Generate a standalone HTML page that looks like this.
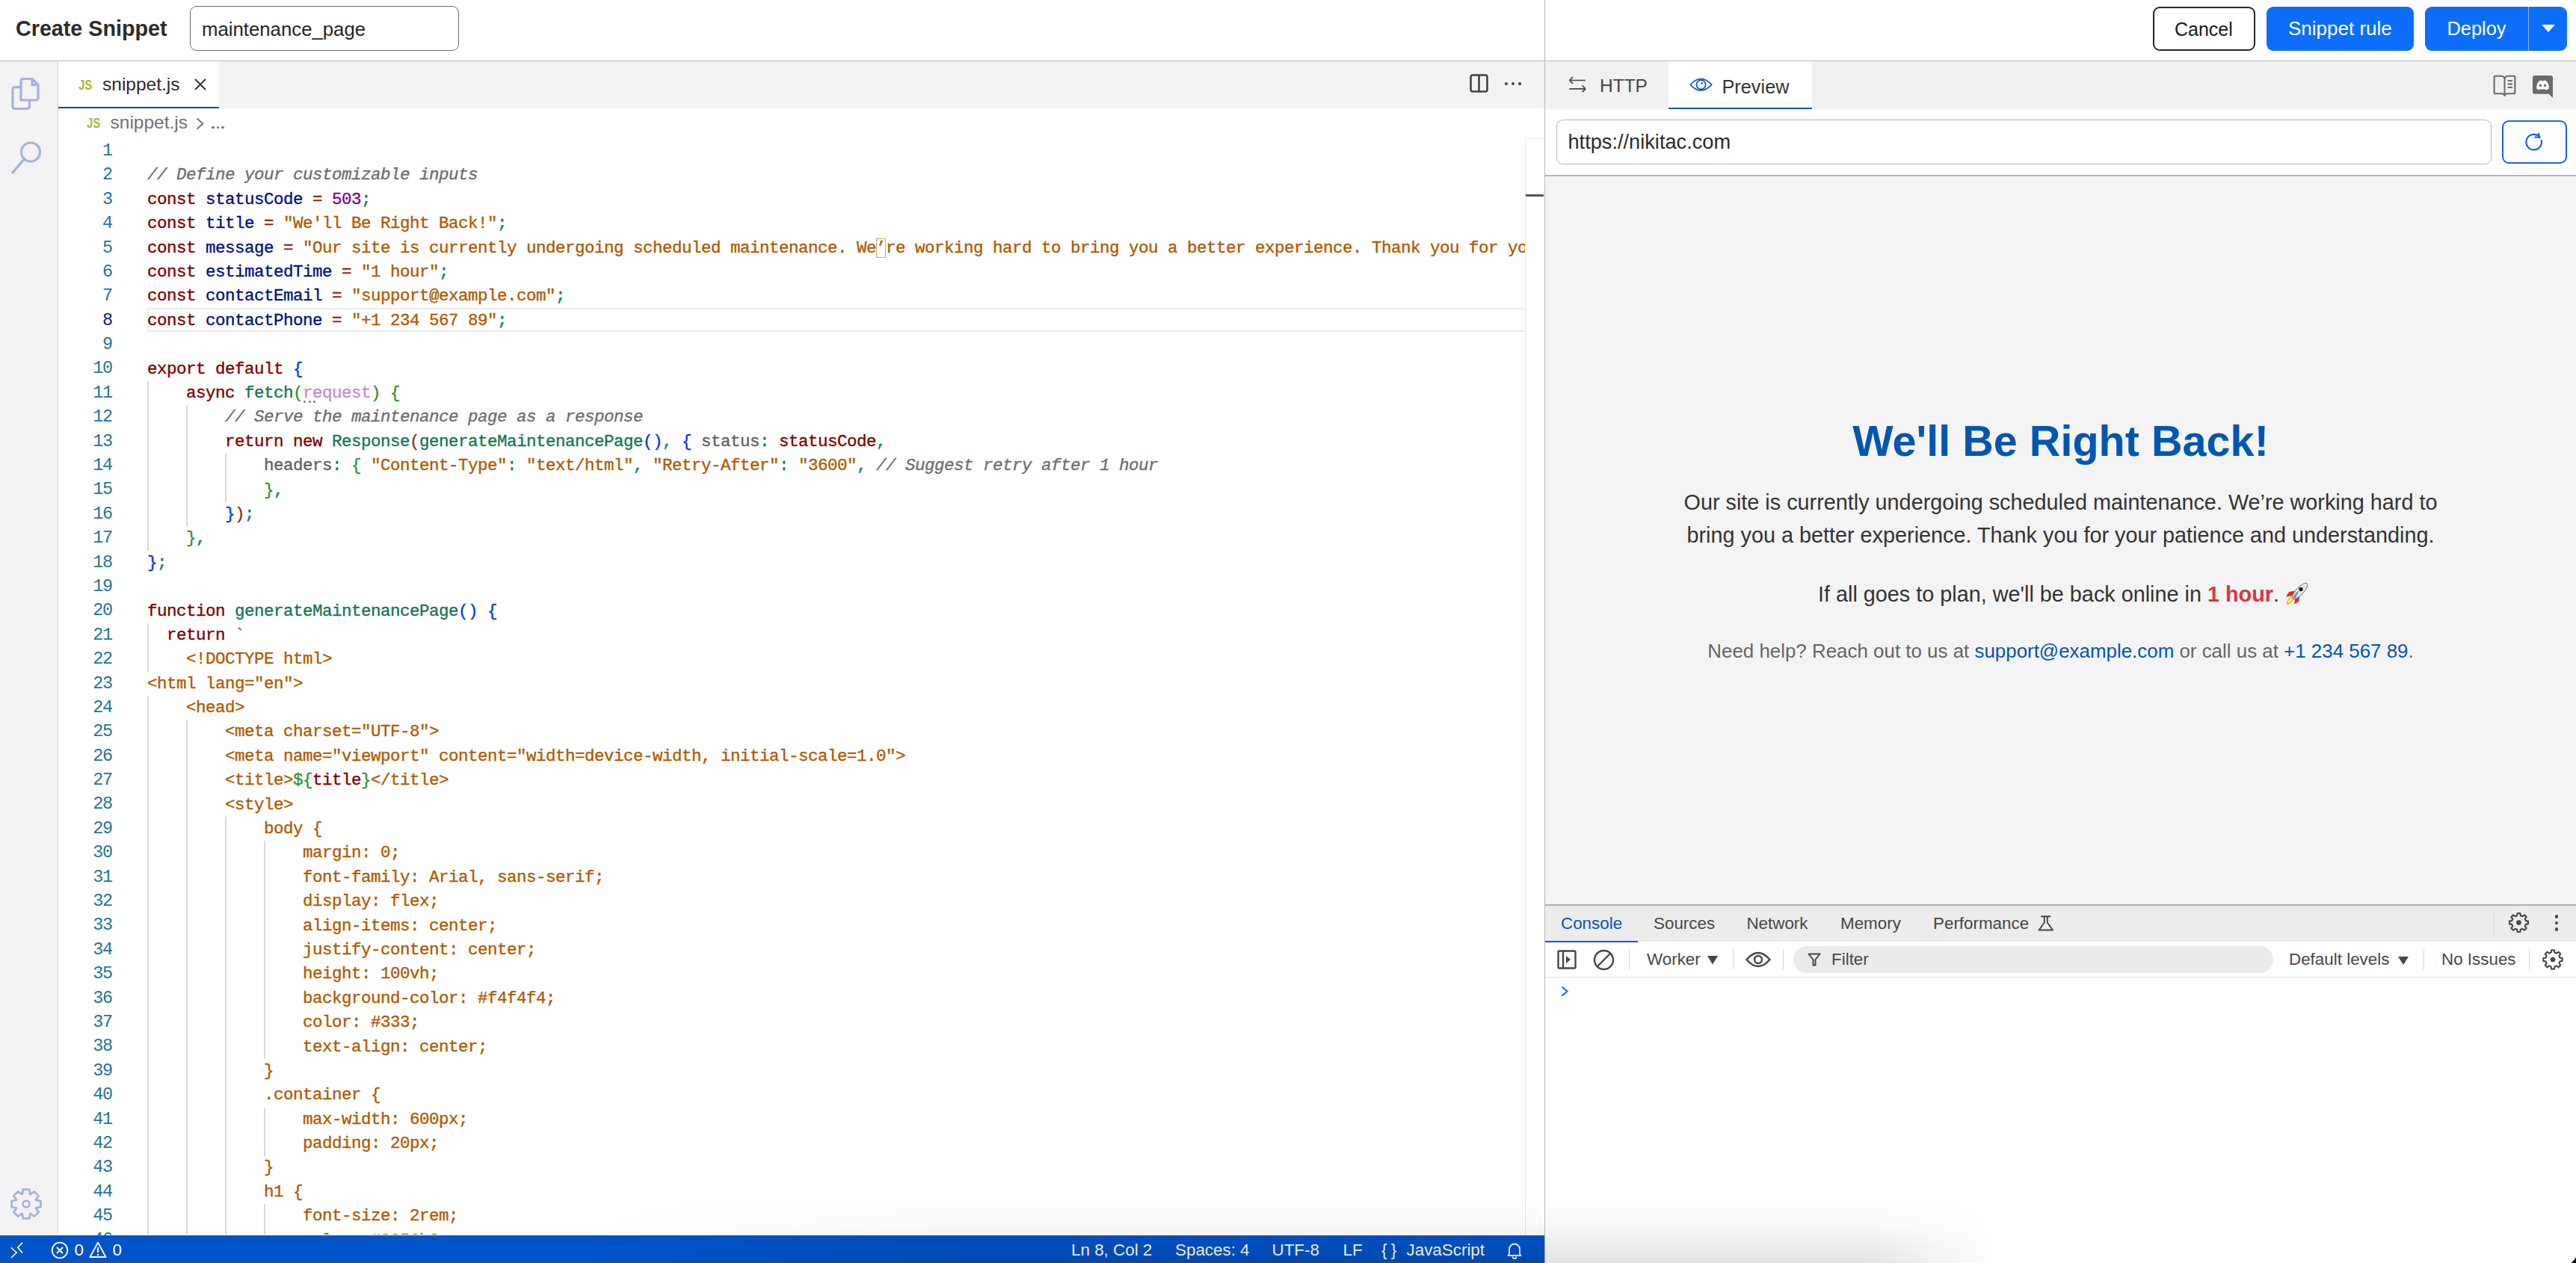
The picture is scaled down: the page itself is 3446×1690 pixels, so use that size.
<!DOCTYPE html><html><head><meta charset="utf-8"><style>
html,body{margin:0;padding:0;width:3446px;height:1690px;overflow:hidden;background:#fff}
.a{position:absolute;white-space:pre;margin:0;padding:0}
svg.a{overflow:visible}
.code{-webkit-text-stroke:0.35px currentColor;font-family:'Liberation Mono', monospace;font-size:22.5px;letter-spacing:-0.5023px;line-height:32.39px;height:32.39px}
.ln{left:90px;width:60px;text-align:right;font-family:'Liberation Mono', monospace;font-size:23.5px;line-height:26.621px;letter-spacing:-1.2px}
</style></head><body><div class="a" style="left:0px;top:0px;width:3446px;height:81px;background:#fff"></div><div class="a" style="left:0px;top:81px;width:3446px;height:1px;background:#b9b9b9"></div><div class="a" style="left:21px;top:22.03px;font-size:28.7px;line-height:32.058px;color:#2b2b2b;font-weight:bold;font-family:'Liberation Sans', sans-serif;">Create Snippet</div><div class="a" style="left:254px;top:8px;width:360px;height:60px;border:1.5px solid #6b6b6b;border-radius:9px;box-sizing:border-box;background:#fff"></div><div class="a" style="left:270px;top:24.70px;font-size:25.75px;line-height:28.763px;color:#262626;font-weight:normal;font-family:'Liberation Sans', sans-serif;">maintenance_page</div><div class="a" style="left:2880px;top:9px;width:137px;height:59px;border:2px solid #262626;border-radius:9px;box-sizing:border-box;background:#fff"></div><div class="a" style="left:2909px;top:26.38px;font-size:25px;line-height:27.925px;color:#1a1a1a;font-weight:normal;font-family:'Liberation Sans', sans-serif;">Cancel</div><div class="a" style="left:3032px;top:9px;width:197px;height:59px;background:#0d6efd;border-radius:9px"></div><div class="a" style="left:3061px;top:23.67px;font-size:26px;line-height:29.042px;color:#fff;font-weight:normal;font-family:'Liberation Sans', sans-serif;">Snippet rule</div><div class="a" style="left:3244px;top:9px;width:190px;height:59px;background:#0d6efd;border-radius:9px"></div><div class="a" style="left:3382px;top:9px;width:1px;height:59px;background:#8fbaf7"></div><div class="a" style="left:3273.5px;top:24.21px;font-size:25.4px;line-height:28.372px;color:#fff;font-weight:normal;font-family:'Liberation Sans', sans-serif;">Deploy</div><svg class="a" style="left:3400px;top:33px;" width="18" height="10" viewBox="0 0 18 10"><path d="M0 0 L18 0 L9 10 Z" fill="#fff"/></svg><div class="a" style="left:0px;top:82px;width:77px;height:1570px;background:#f3f3f3"></div><div class="a" style="left:77px;top:82px;width:1px;height:1570px;background:#d4d4d4"></div><svg class="a" style="left:14px;top:103px;" width="40" height="45" viewBox="0 0 40 45"><path d="M14 31 V5.5 a3 3 0 0 1 3-3 H29 L37 10.5 V28 a3 3 0 0 1 -3 3 Z" fill="none" stroke="#a4b4de" stroke-width="3.2" stroke-linejoin="round"/><path d="M29 3 V10.5 H37" fill="none" stroke="#a4b4de" stroke-width="3.2"/><path d="M14 13.6 H6 a3 3 0 0 0 -3 3 V39.5 a3 3 0 0 0 3 3 H22.5 a3 3 0 0 0 3-3 V31" fill="none" stroke="#a4b4de" stroke-width="3.2" stroke-linejoin="round"/></svg><svg class="a" style="left:14px;top:188px;" width="44" height="46" viewBox="0 0 44 46"><circle cx="27" cy="15.5" r="12.5" fill="none" stroke="#a4b4de" stroke-width="3.2"/><path d="M18.5 24.5 L3 43" stroke="#a4b4de" stroke-width="3.4" stroke-linecap="round"/></svg><svg class="a" style="left:13px;top:1588.5px;" width="44" height="44" viewBox="0 0 44 44"><path d="M35.24 16.87 L41.47 17.91 L41.47 26.09 L35.24 27.13 L34.99 27.73 L38.67 32.88 L32.88 38.67 L27.73 34.99 L27.13 35.24 L26.09 41.47 L17.91 41.47 L16.87 35.24 L16.27 34.99 L11.12 38.67 L5.33 32.88 L9.01 27.73 L8.76 27.13 L2.53 26.09 L2.53 17.91 L8.76 16.87 L9.01 16.27 L5.33 11.12 L11.12 5.33 L16.27 9.01 L16.87 8.76 L17.91 2.53 L26.09 2.53 L27.13 8.76 L27.73 9.01 L32.88 5.33 L38.67 11.12 L34.99 16.27 Z" fill="none" stroke="#a4b4de" stroke-width="2.8" stroke-linejoin="round"/><circle cx="22" cy="22" r="4.4" fill="none" stroke="#a4b4de" stroke-width="2.8"/></svg><div class="a" style="left:78px;top:82px;width:1988px;height:63px;background:#f3f3f3"></div><div class="a" style="left:78px;top:82px;width:215px;height:63px;background:#fff"></div><div class="a" style="left:78px;top:143px;width:215px;height:2px;background:#0e4d9b"></div><div class="a" style="left:104.8px;top:102.81px;font-size:19px;line-height:21.223px;color:#b3b33a;font-weight:bold;font-family:'Liberation Sans', sans-serif;transform:scaleX(0.8);transform-origin:0 0;letter-spacing:-0.3px">JS</div><div class="a" style="left:137px;top:99.23px;font-size:24.5px;line-height:27.366px;color:#2b2b2b;font-weight:normal;font-family:'Liberation Sans', sans-serif;">snippet.js</div><svg class="a" style="left:260px;top:105px;" width="16" height="16" viewBox="0 0 16 16"><path d="M1 1 L15 15 M15 1 L1 15" stroke="#333" stroke-width="1.9"/></svg><svg class="a" style="left:1966px;top:99px;" width="25" height="26" viewBox="0 0 25 26"><rect x="1.5" y="1.5" width="22" height="22" rx="2.5" fill="none" stroke="#424242" stroke-width="2.6"/><path d="M12.5 2 V24" stroke="#424242" stroke-width="2.6"/></svg><div class="a" style="left:2013px;top:110px;width:4.4px;height:4.4px;background:#424242;border-radius:50%"></div><div class="a" style="left:2022px;top:110px;width:4.4px;height:4.4px;background:#424242;border-radius:50%"></div><div class="a" style="left:2031px;top:110px;width:4.4px;height:4.4px;background:#424242;border-radius:50%"></div><div class="a" style="left:78px;top:145px;width:1962px;height:1507px;background:#fff"></div><div class="a" style="left:116px;top:153.81px;font-size:19px;line-height:21.223px;color:#b3b33a;font-weight:bold;font-family:'Liberation Sans', sans-serif;transform:scaleX(0.8);transform-origin:0 0;letter-spacing:-0.3px">JS</div><div class="a" style="left:147.5px;top:150.13px;font-size:24.5px;line-height:27.366px;color:#717171;font-weight:normal;font-family:'Liberation Sans', sans-serif;">snippet.js</div><svg class="a" style="left:262px;top:157px;" width="11" height="17" viewBox="0 0 11 17"><path d="M1.5 1.5 L9.5 8.5 L1.5 15.5" fill="none" stroke="#717171" stroke-width="1.8"/></svg><div class="a" style="left:283.4px;top:168.5px;width:3.2px;height:3.2px;background:#717171;border-radius:50%"></div><div class="a" style="left:289.9px;top:168.5px;width:3.2px;height:3.2px;background:#717171;border-radius:50%"></div><div class="a" style="left:296.4px;top:168.5px;width:3.2px;height:3.2px;background:#717171;border-radius:50%"></div><div class="a" style="left:197.0px;top:185px;width:1843.0px;height:1467px;overflow:hidden"><div class="a" style="left:0.0px;top:325.00px;width:2px;height:32.89px;background:#d9d9d9"></div><div class="a" style="left:0.0px;top:357.39px;width:2px;height:32.89px;background:#d9d9d9"></div><div class="a" style="left:52.0px;top:357.39px;width:2px;height:32.89px;background:#d9d9d9"></div><div class="a" style="left:0.0px;top:389.78px;width:2px;height:32.89px;background:#d9d9d9"></div><div class="a" style="left:52.0px;top:389.78px;width:2px;height:32.89px;background:#d9d9d9"></div><div class="a" style="left:0.0px;top:422.17px;width:2px;height:32.89px;background:#d9d9d9"></div><div class="a" style="left:52.0px;top:422.17px;width:2px;height:32.89px;background:#d9d9d9"></div><div class="a" style="left:104.0px;top:422.17px;width:2px;height:32.89px;background:#d9d9d9"></div><div class="a" style="left:0.0px;top:454.56px;width:2px;height:32.89px;background:#d9d9d9"></div><div class="a" style="left:52.0px;top:454.56px;width:2px;height:32.89px;background:#d9d9d9"></div><div class="a" style="left:104.0px;top:454.56px;width:2px;height:32.89px;background:#d9d9d9"></div><div class="a" style="left:0.0px;top:486.95px;width:2px;height:32.89px;background:#d9d9d9"></div><div class="a" style="left:52.0px;top:486.95px;width:2px;height:32.89px;background:#d9d9d9"></div><div class="a" style="left:0.0px;top:519.34px;width:2px;height:32.89px;background:#d9d9d9"></div><div class="a" style="left:0.0px;top:648.90px;width:2px;height:32.89px;background:#d9d9d9"></div><div class="a" style="left:0.0px;top:681.29px;width:2px;height:32.89px;background:#d9d9d9"></div><div class="a" style="left:0.0px;top:746.07px;width:2px;height:32.89px;background:#d9d9d9"></div><div class="a" style="left:0.0px;top:778.46px;width:2px;height:32.89px;background:#d9d9d9"></div><div class="a" style="left:52.0px;top:778.46px;width:2px;height:32.89px;background:#d9d9d9"></div><div class="a" style="left:0.0px;top:810.85px;width:2px;height:32.89px;background:#d9d9d9"></div><div class="a" style="left:52.0px;top:810.85px;width:2px;height:32.89px;background:#d9d9d9"></div><div class="a" style="left:0.0px;top:843.24px;width:2px;height:32.89px;background:#d9d9d9"></div><div class="a" style="left:52.0px;top:843.24px;width:2px;height:32.89px;background:#d9d9d9"></div><div class="a" style="left:0.0px;top:875.63px;width:2px;height:32.89px;background:#d9d9d9"></div><div class="a" style="left:52.0px;top:875.63px;width:2px;height:32.89px;background:#d9d9d9"></div><div class="a" style="left:0.0px;top:908.02px;width:2px;height:32.89px;background:#d9d9d9"></div><div class="a" style="left:52.0px;top:908.02px;width:2px;height:32.89px;background:#d9d9d9"></div><div class="a" style="left:104.0px;top:908.02px;width:2px;height:32.89px;background:#d9d9d9"></div><div class="a" style="left:0.0px;top:940.41px;width:2px;height:32.89px;background:#d9d9d9"></div><div class="a" style="left:52.0px;top:940.41px;width:2px;height:32.89px;background:#d9d9d9"></div><div class="a" style="left:104.0px;top:940.41px;width:2px;height:32.89px;background:#d9d9d9"></div><div class="a" style="left:156.0px;top:940.41px;width:2px;height:32.89px;background:#d9d9d9"></div><div class="a" style="left:0.0px;top:972.80px;width:2px;height:32.89px;background:#d9d9d9"></div><div class="a" style="left:52.0px;top:972.80px;width:2px;height:32.89px;background:#d9d9d9"></div><div class="a" style="left:104.0px;top:972.80px;width:2px;height:32.89px;background:#d9d9d9"></div><div class="a" style="left:156.0px;top:972.80px;width:2px;height:32.89px;background:#d9d9d9"></div><div class="a" style="left:0.0px;top:1005.19px;width:2px;height:32.89px;background:#d9d9d9"></div><div class="a" style="left:52.0px;top:1005.19px;width:2px;height:32.89px;background:#d9d9d9"></div><div class="a" style="left:104.0px;top:1005.19px;width:2px;height:32.89px;background:#d9d9d9"></div><div class="a" style="left:156.0px;top:1005.19px;width:2px;height:32.89px;background:#d9d9d9"></div><div class="a" style="left:0.0px;top:1037.58px;width:2px;height:32.89px;background:#d9d9d9"></div><div class="a" style="left:52.0px;top:1037.58px;width:2px;height:32.89px;background:#d9d9d9"></div><div class="a" style="left:104.0px;top:1037.58px;width:2px;height:32.89px;background:#d9d9d9"></div><div class="a" style="left:156.0px;top:1037.58px;width:2px;height:32.89px;background:#d9d9d9"></div><div class="a" style="left:0.0px;top:1069.97px;width:2px;height:32.89px;background:#d9d9d9"></div><div class="a" style="left:52.0px;top:1069.97px;width:2px;height:32.89px;background:#d9d9d9"></div><div class="a" style="left:104.0px;top:1069.97px;width:2px;height:32.89px;background:#d9d9d9"></div><div class="a" style="left:156.0px;top:1069.97px;width:2px;height:32.89px;background:#d9d9d9"></div><div class="a" style="left:0.0px;top:1102.36px;width:2px;height:32.89px;background:#d9d9d9"></div><div class="a" style="left:52.0px;top:1102.36px;width:2px;height:32.89px;background:#d9d9d9"></div><div class="a" style="left:104.0px;top:1102.36px;width:2px;height:32.89px;background:#d9d9d9"></div><div class="a" style="left:156.0px;top:1102.36px;width:2px;height:32.89px;background:#d9d9d9"></div><div class="a" style="left:0.0px;top:1134.75px;width:2px;height:32.89px;background:#d9d9d9"></div><div class="a" style="left:52.0px;top:1134.75px;width:2px;height:32.89px;background:#d9d9d9"></div><div class="a" style="left:104.0px;top:1134.75px;width:2px;height:32.89px;background:#d9d9d9"></div><div class="a" style="left:156.0px;top:1134.75px;width:2px;height:32.89px;background:#d9d9d9"></div><div class="a" style="left:0.0px;top:1167.14px;width:2px;height:32.89px;background:#d9d9d9"></div><div class="a" style="left:52.0px;top:1167.14px;width:2px;height:32.89px;background:#d9d9d9"></div><div class="a" style="left:104.0px;top:1167.14px;width:2px;height:32.89px;background:#d9d9d9"></div><div class="a" style="left:156.0px;top:1167.14px;width:2px;height:32.89px;background:#d9d9d9"></div><div class="a" style="left:0.0px;top:1199.53px;width:2px;height:32.89px;background:#d9d9d9"></div><div class="a" style="left:52.0px;top:1199.53px;width:2px;height:32.89px;background:#d9d9d9"></div><div class="a" style="left:104.0px;top:1199.53px;width:2px;height:32.89px;background:#d9d9d9"></div><div class="a" style="left:156.0px;top:1199.53px;width:2px;height:32.89px;background:#d9d9d9"></div><div class="a" style="left:0.0px;top:1231.92px;width:2px;height:32.89px;background:#d9d9d9"></div><div class="a" style="left:52.0px;top:1231.92px;width:2px;height:32.89px;background:#d9d9d9"></div><div class="a" style="left:104.0px;top:1231.92px;width:2px;height:32.89px;background:#d9d9d9"></div><div class="a" style="left:0.0px;top:1264.31px;width:2px;height:32.89px;background:#d9d9d9"></div><div class="a" style="left:52.0px;top:1264.31px;width:2px;height:32.89px;background:#d9d9d9"></div><div class="a" style="left:104.0px;top:1264.31px;width:2px;height:32.89px;background:#d9d9d9"></div><div class="a" style="left:0.0px;top:1296.70px;width:2px;height:32.89px;background:#d9d9d9"></div><div class="a" style="left:52.0px;top:1296.70px;width:2px;height:32.89px;background:#d9d9d9"></div><div class="a" style="left:104.0px;top:1296.70px;width:2px;height:32.89px;background:#d9d9d9"></div><div class="a" style="left:156.0px;top:1296.70px;width:2px;height:32.89px;background:#d9d9d9"></div><div class="a" style="left:0.0px;top:1329.09px;width:2px;height:32.89px;background:#d9d9d9"></div><div class="a" style="left:52.0px;top:1329.09px;width:2px;height:32.89px;background:#d9d9d9"></div><div class="a" style="left:104.0px;top:1329.09px;width:2px;height:32.89px;background:#d9d9d9"></div><div class="a" style="left:156.0px;top:1329.09px;width:2px;height:32.89px;background:#d9d9d9"></div><div class="a" style="left:0.0px;top:1361.48px;width:2px;height:32.89px;background:#d9d9d9"></div><div class="a" style="left:52.0px;top:1361.48px;width:2px;height:32.89px;background:#d9d9d9"></div><div class="a" style="left:104.0px;top:1361.48px;width:2px;height:32.89px;background:#d9d9d9"></div><div class="a" style="left:0.0px;top:1393.87px;width:2px;height:32.89px;background:#d9d9d9"></div><div class="a" style="left:52.0px;top:1393.87px;width:2px;height:32.89px;background:#d9d9d9"></div><div class="a" style="left:104.0px;top:1393.87px;width:2px;height:32.89px;background:#d9d9d9"></div><div class="a" style="left:0.0px;top:1426.26px;width:2px;height:32.89px;background:#d9d9d9"></div><div class="a" style="left:52.0px;top:1426.26px;width:2px;height:32.89px;background:#d9d9d9"></div><div class="a" style="left:104.0px;top:1426.26px;width:2px;height:32.89px;background:#d9d9d9"></div><div class="a" style="left:156.0px;top:1426.26px;width:2px;height:32.89px;background:#d9d9d9"></div><div class="a" style="left:0.0px;top:1458.65px;width:2px;height:32.89px;background:#d9d9d9"></div><div class="a" style="left:52.0px;top:1458.65px;width:2px;height:32.89px;background:#d9d9d9"></div><div class="a" style="left:104.0px;top:1458.65px;width:2px;height:32.89px;background:#d9d9d9"></div><div class="a" style="left:156.0px;top:1458.65px;width:2px;height:32.89px;background:#d9d9d9"></div><div class="a" style="left:0px;top:227px;width:1843px;height:32px;border:2.5px solid #ececec;border-right:none;box-sizing:border-box"></div><div class="a code" style="left:0;top:1.10px"></div><div class="a code" style="left:0;top:33.49px"><span style="color:#6e6e6e;font-style:italic">// Define your customizable inputs</span></div><div class="a code" style="left:0;top:65.88px"><span style="color:#800000">const</span> <span style="color:#001080">statusCode</span> <span style="color:#8a1c0c">=</span> <span style="color:#800080">503</span><span style="color:#0b7b78">;</span></div><div class="a code" style="left:0;top:98.27px"><span style="color:#800000">const</span> <span style="color:#001080">title</span> <span style="color:#8a1c0c">=</span> <span style="color:#b05a00">&quot;We&#x27;ll Be Right Back!&quot;</span><span style="color:#0b7b78">;</span></div><div class="a code" style="left:0;top:130.66px"><span style="color:#800000">const</span> <span style="color:#001080">message</span> <span style="color:#8a1c0c">=</span> <span style="color:#b05a00">&quot;Our site is currently undergoing scheduled maintenance. We</span><span style="color:#b05a00;outline:1.5px solid #d6a65e;outline-offset:-1px">’</span><span style="color:#b05a00">re working hard to bring you a better experience. Thank you for your patience and understanding.&quot;</span><span style="color:#0b7b78">;</span></div><div class="a code" style="left:0;top:163.05px"><span style="color:#800000">const</span> <span style="color:#001080">estimatedTime</span> <span style="color:#8a1c0c">=</span> <span style="color:#b05a00">&quot;1 hour&quot;</span><span style="color:#0b7b78">;</span></div><div class="a code" style="left:0;top:195.44px"><span style="color:#800000">const</span> <span style="color:#001080">contactEmail</span> <span style="color:#8a1c0c">=</span> <span style="color:#b05a00">&quot;support@example.com&quot;</span><span style="color:#0b7b78">;</span></div><div class="a code" style="left:0;top:227.83px"><span style="color:#800000">const</span> <span style="color:#001080">contactPhone</span> <span style="color:#8a1c0c">=</span> <span style="color:#b05a00">&quot;+1 234 567 89&quot;</span><span style="color:#0b7b78">;</span></div><div class="a code" style="left:0;top:260.22px"></div><div class="a code" style="left:0;top:292.61px"><span style="color:#800000">export</span> <span style="color:#800000">default</span> <span style="color:#0431fa">{</span></div><div class="a code" style="left:0;top:325.00px">    <span style="color:#800000">async</span> <span style="color:#157650">fetch</span><span style="color:#319331">(</span><span style="color:#c48bd8">request</span><span style="color:#319331">)</span> <span style="color:#319331">{</span></div><div class="a code" style="left:0;top:357.39px">        <span style="color:#6e6e6e;font-style:italic">// Serve the maintenance page as a response</span></div><div class="a code" style="left:0;top:389.78px">        <span style="color:#800000">return</span> <span style="color:#800000">new</span> <span style="color:#157650">Response</span><span style="color:#7b3814">(</span><span style="color:#157650">generateMaintenancePage</span><span style="color:#0431fa">()</span><span style="color:#0b7b78">,</span> <span style="color:#0431fa">{</span> <span style="color:#5f5f5f">status</span><span style="color:#0b7b78">:</span> <span style="color:#800000">statusCode</span><span style="color:#0b7b78">,</span></div><div class="a code" style="left:0;top:422.17px">            <span style="color:#5f5f5f">headers</span><span style="color:#0b7b78">:</span> <span style="color:#319331">{</span> <span style="color:#b05a00">&quot;Content-Type&quot;</span><span style="color:#0b7b78">:</span> <span style="color:#b05a00">&quot;text/html&quot;</span><span style="color:#0b7b78">,</span> <span style="color:#b05a00">&quot;Retry-After&quot;</span><span style="color:#0b7b78">:</span> <span style="color:#b05a00">&quot;3600&quot;</span><span style="color:#0b7b78">,</span> <span style="color:#6e6e6e;font-style:italic">// Suggest retry after 1 hour</span></div><div class="a code" style="left:0;top:454.56px">            <span style="color:#319331">}</span><span style="color:#0b7b78">,</span></div><div class="a code" style="left:0;top:486.95px">        <span style="color:#0431fa">}</span><span style="color:#7b3814">)</span><span style="color:#0b7b78">;</span></div><div class="a code" style="left:0;top:519.34px">    <span style="color:#319331">}</span><span style="color:#0b7b78">,</span></div><div class="a code" style="left:0;top:551.73px"><span style="color:#0431fa">}</span><span style="color:#0b7b78">;</span></div><div class="a code" style="left:0;top:584.12px"></div><div class="a code" style="left:0;top:616.51px"><span style="color:#800000">function</span> <span style="color:#157650">generateMaintenancePage</span><span style="color:#0431fa">()</span> <span style="color:#0431fa">{</span></div><div class="a code" style="left:0;top:648.90px">  <span style="color:#800000">return</span> <span style="color:#b05a00">`</span></div><div class="a code" style="left:0;top:681.29px">    <span style="color:#b05a00">&lt;!DOCTYPE html&gt;</span></div><div class="a code" style="left:0;top:713.68px"><span style="color:#b05a00">&lt;html lang=&quot;en&quot;&gt;</span></div><div class="a code" style="left:0;top:746.07px">    <span style="color:#b05a00">&lt;head&gt;</span></div><div class="a code" style="left:0;top:778.46px">        <span style="color:#b05a00">&lt;meta charset=&quot;UTF-8&quot;&gt;</span></div><div class="a code" style="left:0;top:810.85px">        <span style="color:#b05a00">&lt;meta name=&quot;viewport&quot; content=&quot;width=device-width, initial-scale=1.0&quot;&gt;</span></div><div class="a code" style="left:0;top:843.24px">        <span style="color:#b05a00">&lt;title&gt;</span><span style="color:#319331">${</span><span style="color:#800000">title</span><span style="color:#319331">}</span><span style="color:#b05a00">&lt;/title&gt;</span></div><div class="a code" style="left:0;top:875.63px">        <span style="color:#b05a00">&lt;style&gt;</span></div><div class="a code" style="left:0;top:908.02px">            <span style="color:#b05a00">body {</span></div><div class="a code" style="left:0;top:940.41px">                <span style="color:#b05a00">margin: 0;</span></div><div class="a code" style="left:0;top:972.80px">                <span style="color:#b05a00">font-family: Arial, sans-serif;</span></div><div class="a code" style="left:0;top:1005.19px">                <span style="color:#b05a00">display: flex;</span></div><div class="a code" style="left:0;top:1037.58px">                <span style="color:#b05a00">align-items: center;</span></div><div class="a code" style="left:0;top:1069.97px">                <span style="color:#b05a00">justify-content: center;</span></div><div class="a code" style="left:0;top:1102.36px">                <span style="color:#b05a00">height: 100vh;</span></div><div class="a code" style="left:0;top:1134.75px">                <span style="color:#b05a00">background-color: #f4f4f4;</span></div><div class="a code" style="left:0;top:1167.14px">                <span style="color:#b05a00">color: #333;</span></div><div class="a code" style="left:0;top:1199.53px">                <span style="color:#b05a00">text-align: center;</span></div><div class="a code" style="left:0;top:1231.92px">            <span style="color:#b05a00">}</span></div><div class="a code" style="left:0;top:1264.31px">            <span style="color:#b05a00">.container {</span></div><div class="a code" style="left:0;top:1296.70px">                <span style="color:#b05a00">max-width: 600px;</span></div><div class="a code" style="left:0;top:1329.09px">                <span style="color:#b05a00">padding: 20px;</span></div><div class="a code" style="left:0;top:1361.48px">            <span style="color:#b05a00">}</span></div><div class="a code" style="left:0;top:1393.87px">            <span style="color:#b05a00">h1 {</span></div><div class="a code" style="left:0;top:1426.26px">                <span style="color:#b05a00">font-size: 2rem;</span></div><div class="a code" style="left:0;top:1458.65px">                <span style="color:#b05a00">color: #0056b3;</span></div><div class="a" style="left:209.0px;top:351px;width:3.2px;height:3.2px;border-radius:50%;background:#7a7a7a"></div><div class="a" style="left:215.5px;top:351px;width:3.2px;height:3.2px;border-radius:50%;background:#7a7a7a"></div><div class="a" style="left:222.0px;top:351px;width:3.2px;height:3.2px;border-radius:50%;background:#7a7a7a"></div></div><div class="a ln" style="top:188.94px;color:#237893">1</div><div class="a ln" style="top:221.33px;color:#237893">2</div><div class="a ln" style="top:253.72px;color:#237893">3</div><div class="a ln" style="top:286.11px;color:#237893">4</div><div class="a ln" style="top:318.50px;color:#237893">5</div><div class="a ln" style="top:350.89px;color:#237893">6</div><div class="a ln" style="top:383.28px;color:#237893">7</div><div class="a ln" style="top:415.67px;color:#0b216f">8</div><div class="a ln" style="top:448.06px;color:#237893">9</div><div class="a ln" style="top:480.45px;color:#237893">10</div><div class="a ln" style="top:512.84px;color:#237893">11</div><div class="a ln" style="top:545.23px;color:#237893">12</div><div class="a ln" style="top:577.62px;color:#237893">13</div><div class="a ln" style="top:610.01px;color:#237893">14</div><div class="a ln" style="top:642.40px;color:#237893">15</div><div class="a ln" style="top:674.79px;color:#237893">16</div><div class="a ln" style="top:707.18px;color:#237893">17</div><div class="a ln" style="top:739.57px;color:#237893">18</div><div class="a ln" style="top:771.96px;color:#237893">19</div><div class="a ln" style="top:804.35px;color:#237893">20</div><div class="a ln" style="top:836.74px;color:#237893">21</div><div class="a ln" style="top:869.13px;color:#237893">22</div><div class="a ln" style="top:901.52px;color:#237893">23</div><div class="a ln" style="top:933.91px;color:#237893">24</div><div class="a ln" style="top:966.30px;color:#237893">25</div><div class="a ln" style="top:998.69px;color:#237893">26</div><div class="a ln" style="top:1031.08px;color:#237893">27</div><div class="a ln" style="top:1063.47px;color:#237893">28</div><div class="a ln" style="top:1095.86px;color:#237893">29</div><div class="a ln" style="top:1128.25px;color:#237893">30</div><div class="a ln" style="top:1160.64px;color:#237893">31</div><div class="a ln" style="top:1193.03px;color:#237893">32</div><div class="a ln" style="top:1225.42px;color:#237893">33</div><div class="a ln" style="top:1257.81px;color:#237893">34</div><div class="a ln" style="top:1290.20px;color:#237893">35</div><div class="a ln" style="top:1322.59px;color:#237893">36</div><div class="a ln" style="top:1354.98px;color:#237893">37</div><div class="a ln" style="top:1387.37px;color:#237893">38</div><div class="a ln" style="top:1419.76px;color:#237893">39</div><div class="a ln" style="top:1452.15px;color:#237893">40</div><div class="a ln" style="top:1484.54px;color:#237893">41</div><div class="a ln" style="top:1516.93px;color:#237893">42</div><div class="a ln" style="top:1549.32px;color:#237893">43</div><div class="a ln" style="top:1581.71px;color:#237893">44</div><div class="a ln" style="top:1614.10px;color:#237893">45</div><div class="a ln" style="top:1646.49px;color:#237893">46</div><div class="a" style="left:2040px;top:185px;width:1px;height:1467px;background:#e6e6e6"></div><div class="a" style="left:2040px;top:185px;width:26px;height:1px;background:#ececec"></div><div class="a" style="left:2041px;top:260px;width:24px;height:3px;background:#555"></div><div class="a" style="left:0px;top:1653px;width:2066px;height:37px;background:#0053c9"></div><svg class="a" style="left:13px;top:1661px;" width="19" height="23" viewBox="0 0 19 23"><path d="M1.9 8.5 L9.2 15 L1.9 22" fill="none" stroke="#fff" stroke-width="1.6"/><path d="M17 1.9 L10.8 8.2 L17 15.5" fill="none" stroke="#fff" stroke-width="1.6"/></svg><svg class="a" style="left:68px;top:1661px;" width="24" height="24" viewBox="0 0 24 24"><circle cx="12" cy="12" r="10.3" fill="none" stroke="#fff" stroke-width="1.8"/><path d="M8 8 L16 16 M16 8 L8 16" stroke="#fff" stroke-width="1.8"/></svg><div class="a" style="left:99.5px;top:1660.23px;font-size:22.4px;line-height:25.021px;color:#fff;font-weight:normal;font-family:'Liberation Sans', sans-serif;">0</div><svg class="a" style="left:119px;top:1661px;" width="24" height="22" viewBox="0 0 24 22"><path d="M12 1.5 L22.5 21 H1.5 Z" fill="none" stroke="#fff" stroke-width="1.8" stroke-linejoin="round"/><path d="M12 8 V15" stroke="#fff" stroke-width="2"/><circle cx="12" cy="18" r="1.2" fill="#fff"/></svg><div class="a" style="left:150.5px;top:1660.23px;font-size:22.4px;line-height:25.021px;color:#fff;font-weight:normal;font-family:'Liberation Sans', sans-serif;">0</div><div class="a" style="left:1433px;top:1660.23px;font-size:22.4px;line-height:25.021px;color:#fff;font-weight:normal;font-family:'Liberation Sans', sans-serif;">Ln 8, Col 2</div><div class="a" style="left:1572px;top:1660.23px;font-size:22.4px;line-height:25.021px;color:#fff;font-weight:normal;font-family:'Liberation Sans', sans-serif;">Spaces: 4</div><div class="a" style="left:1701.5px;top:1660.23px;font-size:22.4px;line-height:25.021px;color:#fff;font-weight:normal;font-family:'Liberation Sans', sans-serif;">UTF-8</div><div class="a" style="left:1796.5px;top:1660.23px;font-size:22.4px;line-height:25.021px;color:#fff;font-weight:normal;font-family:'Liberation Sans', sans-serif;letter-spacing:0px">LF</div><div class="a" style="left:1848px;top:1660.23px;font-size:22.4px;line-height:25.021px;color:#fff;font-weight:normal;font-family:'Liberation Sans', sans-serif;letter-spacing:-0.5px">{ }</div><div class="a" style="left:1881.5px;top:1660.23px;font-size:22.4px;line-height:25.021px;color:#fff;font-weight:normal;font-family:'Liberation Sans', sans-serif;">JavaScript</div><svg class="a" style="left:2016px;top:1662px;" width="20" height="22" viewBox="0 0 20 22"><path d="M3 16 V9.5 a7 7 0 0 1 14 0 V16 L18.5 18 H1.5 Z" fill="none" stroke="#fff" stroke-width="1.8" stroke-linejoin="round"/><path d="M7.5 19.5 a2.5 2.5 0 0 0 5 0" fill="none" stroke="#fff" stroke-width="1.8"/></svg><div class="a" style="left:2066px;top:0px;width:1px;height:1690px;background:#b9b9b9"></div><div class="a" style="left:2067px;top:82px;width:1379px;height:64px;background:#f1f1f1"></div><div class="a" style="left:2232px;top:82px;width:192px;height:64px;background:#fff"></div><div class="a" style="left:2232px;top:143.5px;width:192px;height:2.5px;background:#0b57b0"></div><svg class="a" style="left:2097px;top:102px;" width="27" height="24" viewBox="0 0 27 24"><path d="M2.6 5.5 H24 M2.6 5.5 L7 1.2 M2.6 5.5 L7 9.8" fill="none" stroke="#444" stroke-width="1.7"/><path d="M2.4 16.8 H24 M24 16.8 L19.6 12.5 M24 16.8 L19.6 21.1" fill="none" stroke="#444" stroke-width="1.7"/></svg><div class="a" style="left:2140px;top:101.43px;font-size:24.5px;line-height:27.366px;color:#444;font-weight:normal;font-family:'Liberation Sans', sans-serif;">HTTP</div><svg class="a" style="left:2260px;top:104px;" width="31" height="19" viewBox="0 0 31 19"><path d="M1.3 9.3 Q15.5 -6.2 29.7 9.3 Q15.5 24.6 1.3 9.3 Z" fill="none" stroke="#1459b8" stroke-width="1.7" stroke-linejoin="round"/><circle cx="15.6" cy="9.3" r="6.1" fill="none" stroke="#1459b8" stroke-width="1.7"/><circle cx="16.7" cy="7.4" r="1.35" fill="#1459b8"/></svg><div class="a" style="left:2303.5px;top:101.60px;font-size:25.3px;line-height:28.260px;color:#333;font-weight:normal;font-family:'Liberation Sans', sans-serif;">Preview</div><svg class="a" style="left:3335px;top:100px;" width="31" height="30" viewBox="0 0 31 30"><path d="M2.5 1.8 H10.5 Q15 1.8 15.5 5.5 V28 Q15 25.2 10.5 25.2 H2.5 Q1.6 25.2 1.6 24.2 V2.8 Q1.6 1.8 2.5 1.8 Z" fill="none" stroke="#6b6b6b" stroke-width="2.1" stroke-linejoin="round"/><path d="M15.5 5.5 Q16 1.8 20.5 1.8 H28.5 Q29.4 1.8 29.4 2.8 V24.2 Q29.4 25.2 28.5 25.2 H20.5 Q16 25.2 15.5 28" fill="none" stroke="#6b6b6b" stroke-width="2.1" stroke-linejoin="round"/><path d="M19.5 8 H26 M19.5 12.5 H26 M19.5 17 H26" stroke="#6b6b6b" stroke-width="2.1"/></svg><svg class="a" style="left:3388px;top:100.5px;" width="27" height="30" viewBox="0 0 27 30"><path d="M3 0 H24 a3 3 0 0 1 3 3 V30 L21.5 24.8 H3 a3 3 0 0 1 -3-3 V3 a3 3 0 0 1 3-3 Z" fill="#6b6b6b"/><path d="M5.2 17.5 Q5 11.5 8.6 7.6 Q10.5 6.8 12 6.6 L12.6 7.7 Q13.5 7.5 14.4 7.7 L15 6.6 Q16.5 6.8 18.4 7.6 Q22 11.5 21.8 17.5 Q19.8 19.2 17.6 19.4 L16.7 17.9 Q15.1 18.5 13.5 18.5 Q11.9 18.5 10.3 17.9 L9.4 19.4 Q7.2 19.2 5.2 17.5 Z" fill="#fff"/><ellipse cx="10.5" cy="13.4" rx="1.6" ry="1.8" fill="#6b6b6b"/><ellipse cx="16.5" cy="13.4" rx="1.6" ry="1.8" fill="#6b6b6b"/></svg><div class="a" style="left:2067px;top:146px;width:1379px;height:88px;background:#fff"></div><div class="a" style="left:2082px;top:160px;width:1251px;height:60px;border:1.6px solid #b5b5b5;border-radius:9px;box-sizing:border-box"></div><div class="a" style="left:2097.5px;top:174.88px;font-size:27.2px;line-height:30.382px;color:#2b2b2b;font-weight:normal;font-family:'Liberation Sans', sans-serif;">https://nikitac.com</div><div class="a" style="left:3347px;top:161px;width:87px;height:58px;border:2.2px solid #1f63cf;border-radius:9px;box-sizing:border-box"></div><svg class="a" style="left:3377px;top:177px;" width="28" height="27" viewBox="0 0 28 27"><path d="M22.5 10 A10.3 10.3 0 1 1 19 5" fill="none" stroke="#1f63cf" stroke-width="2.2"/><path d="M13.5 4.5 L20.5 4.8 L18.5 -1" fill="none" stroke="#1f63cf" stroke-width="2.2" transform="translate(0,2)"/></svg><div class="a" style="left:2067px;top:234px;width:1379px;height:2px;background:#b5b5b5"></div><div class="a" style="left:2067px;top:236px;width:1379px;height:975px;background:#f4f4f4"></div><div class="a" style="left:2067px;top:557.67px;width:1379px;text-align:center;font:bold 57.6px/64.34px 'Liberation Sans', sans-serif;color:#0056b3">We'll Be Right Back!</div><div class="a" style="white-space:normal;left:2252.5px;top:649.62px;width:1008px;text-align:center;font:28.8px/44px 'Liberation Sans', sans-serif;color:#333">Our site is currently undergoing scheduled maintenance. We’re working hard to bring you a better experience. Thank you for your patience and understanding.</div><div class="a" style="left:2070px;top:772.82px;width:1379px;text-align:center;font:28.8px/44px 'Liberation Sans', sans-serif;color:#333">If all goes to plan, we'll be back online in <b style="color:#dc3545">1 hour</b>. <svg width="29" height="27" viewBox="0 0 29 27" style="vertical-align:-3px;margin-left:1px;overflow:visible"><path d="M11.5 9.5 L4 11 L0 17.5 L9 16Z" fill="#ef2a12"/><path d="M18.5 16 L17 24 L11 27.5 L12.5 18.5Z" fill="#ef2a12"/><ellipse cx="6" cy="22" rx="7.5" ry="3" transform="rotate(-50 6 22)" fill="#f6b51e"/><ellipse cx="6" cy="22" rx="5" ry="1.6" transform="rotate(-50 6 22)" fill="#fbf06a"/><ellipse cx="18.5" cy="10" rx="14" ry="5" transform="rotate(-47 18.5 10)" fill="#e4e9ef" stroke="#50627a" stroke-width="0.8"/><path d="M9.5 19 Q12 12 17.5 9.5 Q15 15 12 20.5Z" fill="#5a95cf"/><circle cx="20" cy="7.5" r="2.7" fill="#3b0a10"/></svg></div><div class="a" style="left:2067px;top:852.02px;width:1379px;text-align:center;font:25.92px/38px 'Liberation Sans', sans-serif;color:#666">Need help? Reach out to us at <span style="color:#0056b3">support@example.com</span> or call us at <span style="color:#0056b3">+1 234 567 89</span>.</div><div class="a" style="left:2067px;top:1210px;width:1379px;height:2px;background:#b0b0b0"></div><div class="a" style="left:2067px;top:1212px;width:1379px;height:48px;background:#ececec"></div><div class="a" style="left:2067px;top:1260px;width:1379px;height:430px;background:#fff"></div><div class="a" style="left:2067px;top:1307px;width:1379px;height:1.2px;background:#e0e0e0"></div><div class="a" style="left:2088px;top:1222.73px;font-size:22.4px;line-height:25.021px;color:#0b52bd;font-weight:normal;font-family:'Liberation Sans', sans-serif;">Console</div><div class="a" style="left:2212px;top:1222.73px;font-size:22.4px;line-height:25.021px;color:#474747;font-weight:normal;font-family:'Liberation Sans', sans-serif;">Sources</div><div class="a" style="left:2336.4px;top:1222.73px;font-size:22.4px;line-height:25.021px;color:#474747;font-weight:normal;font-family:'Liberation Sans', sans-serif;">Network</div><div class="a" style="left:2462px;top:1222.73px;font-size:22.4px;line-height:25.021px;color:#474747;font-weight:normal;font-family:'Liberation Sans', sans-serif;">Memory</div><div class="a" style="left:2586px;top:1222.73px;font-size:22.4px;line-height:25.021px;color:#474747;font-weight:normal;font-family:'Liberation Sans', sans-serif;">Performance</div><div class="a" style="left:2067px;top:1258.5px;width:124px;height:2.2px;background:#1459c4"></div><svg class="a" style="left:2725.5px;top:1224px;" width="22" height="22" viewBox="0 0 22 22"><path d="M5 2.2 H16.5 M8.8 2.2 V10.5 L1.6 20.5 H20 L12.8 10.5 V2.2" fill="none" stroke="#474747" stroke-width="2" stroke-linejoin="round" stroke-linecap="round"/></svg><div class="a" style="left:3336px;top:1220px;width:1px;height:31px;background:#d6d6d6"></div><svg class="a" style="left:3356px;top:1221px;" width="27" height="27" viewBox="0 0 27 27"><path d="M22.80 11.12 L25.96 11.62 L25.96 15.38 L22.80 15.88 L21.76 18.40 L23.64 20.98 L20.98 23.64 L18.40 21.76 L15.88 22.80 L15.38 25.96 L11.62 25.96 L11.12 22.80 L8.60 21.76 L6.02 23.64 L3.36 20.98 L5.24 18.40 L4.20 15.88 L1.04 15.38 L1.04 11.62 L4.20 11.12 L5.24 8.60 L3.36 6.02 L6.02 3.36 L8.60 5.24 L11.12 4.20 L11.62 1.04 L15.38 1.04 L15.88 4.20 L18.40 5.24 L20.98 3.36 L23.64 6.02 L21.76 8.60 Z" fill="none" stroke="#474747" stroke-width="2.1" stroke-linejoin="round"/><circle cx="13.5" cy="13.5" r="3.3" fill="#474747"/></svg><div class="a" style="left:3417.8px;top:1224.3px;width:4.4px;height:4.4px;background:#474747;border-radius:50%"></div><div class="a" style="left:3417.8px;top:1232.8px;width:4.4px;height:4.4px;background:#474747;border-radius:50%"></div><div class="a" style="left:3417.8px;top:1241.2px;width:4.4px;height:4.4px;background:#474747;border-radius:50%"></div><svg class="a" style="left:2083px;top:1271px;" width="26" height="26" viewBox="0 0 26 26"><rect x="1.5" y="1.5" width="23" height="23" rx="1.5" fill="none" stroke="#474747" stroke-width="2.4"/><path d="M8 2 V24" stroke="#474747" stroke-width="2.4"/><path d="M12 8 L18 13 L12 18Z" fill="#474747"/></svg><svg class="a" style="left:2131px;top:1270px;" width="29" height="29" viewBox="0 0 29 29"><circle cx="14.5" cy="14.5" r="12.5" fill="none" stroke="#474747" stroke-width="2.4"/><path d="M23.5 5.5 L5.5 23.5" stroke="#474747" stroke-width="2.4"/></svg><div class="a" style="left:2179px;top:1270px;width:1px;height:27px;background:#d6d6d6"></div><div class="a" style="left:2203px;top:1271.03px;font-size:22.4px;line-height:25.021px;color:#474747;font-weight:normal;font-family:'Liberation Sans', sans-serif;">Worker</div><svg class="a" style="left:2284px;top:1279px;" width="14" height="12" viewBox="0 0 14 12"><path d="M0 0 H14 L7 11.5Z" fill="#474747"/></svg><div class="a" style="left:2318px;top:1270px;width:1px;height:27px;background:#d6d6d6"></div><svg class="a" style="left:2335px;top:1273px;" width="34" height="22" viewBox="0 0 34 22"><path d="M1.5 11 Q17 -7 32.5 11 Q17 29 1.5 11Z" fill="none" stroke="#474747" stroke-width="2.4"/><circle cx="17" cy="11" r="5" fill="none" stroke="#474747" stroke-width="2.4"/></svg><div class="a" style="left:2385px;top:1270px;width:1px;height:27px;background:#d6d6d6"></div><div class="a" style="left:2399px;top:1266px;width:642px;height:36px;background:#ebebeb;border-radius:18px"></div><svg class="a" style="left:2418px;top:1275px;" width="18" height="18" viewBox="0 0 18 18"><path d="M1.5 1.5 H16.5 L10.5 9 V16.5 L7.5 16.5 V9 Z" fill="none" stroke="#474747" stroke-width="2" stroke-linejoin="round"/></svg><div class="a" style="left:2450px;top:1271.03px;font-size:22.4px;line-height:25.021px;color:#474747;font-weight:normal;font-family:'Liberation Sans', sans-serif;">Filter</div><div class="a" style="left:3062px;top:1271.03px;font-size:22.4px;line-height:25.021px;color:#474747;font-weight:normal;font-family:'Liberation Sans', sans-serif;">Default levels</div><svg class="a" style="left:3208px;top:1280px;" width="14" height="11" viewBox="0 0 14 11"><path d="M0 0 H14 L7 11Z" fill="#474747"/></svg><div class="a" style="left:3242px;top:1270px;width:1px;height:28px;background:#d6d6d6"></div><div class="a" style="left:3266px;top:1271.03px;font-size:22.4px;line-height:25.021px;color:#474747;font-weight:normal;font-family:'Liberation Sans', sans-serif;">No Issues</div><div class="a" style="left:3382.5px;top:1270px;width:1px;height:28px;background:#d6d6d6"></div><svg class="a" style="left:3401px;top:1270px;" width="28" height="28" viewBox="0 0 28 28"><path d="M23.50 11.58 L26.66 12.09 L26.66 15.91 L23.50 16.42 L22.43 19.00 L24.30 21.60 L21.60 24.30 L19.00 22.43 L16.42 23.50 L15.91 26.66 L12.09 26.66 L11.58 23.50 L9.00 22.43 L6.40 24.30 L3.70 21.60 L5.57 19.00 L4.50 16.42 L1.34 15.91 L1.34 12.09 L4.50 11.58 L5.57 9.00 L3.70 6.40 L6.40 3.70 L9.00 5.57 L11.58 4.50 L12.09 1.34 L15.91 1.34 L16.42 4.50 L19.00 5.57 L21.60 3.70 L24.30 6.40 L22.43 9.00 Z" fill="none" stroke="#474747" stroke-width="2.1" stroke-linejoin="round"/><circle cx="14" cy="14" r="3.3" fill="#474747"/></svg><svg class="a" style="left:2088px;top:1319px;" width="11" height="15" viewBox="0 0 11 15"><path d="M1.5 1.5 L8.5 7.5 L1.5 13.5" fill="none" stroke="#1a73e8" stroke-width="2.2"/></svg><div class="a" style="left:780px;top:1600px;width:1900px;height:90px;background:linear-gradient(to bottom, rgba(0,0,0,0) 0%, rgba(0,0,0,0.025) 45%, rgba(0,0,0,0.11) 100%);-webkit-mask-image:linear-gradient(to right, transparent 0px, #000 500px, #000 1720px, transparent 1890px);pointer-events:none"></div><svg class="a" style="left:3436px;top:1678px" width="10" height="12" viewBox="0 0 10 12"><path d="M3.5 12 Q7.5 8.5 10 4.3 V12 Z" fill="#17140f"/></svg></body></html>
